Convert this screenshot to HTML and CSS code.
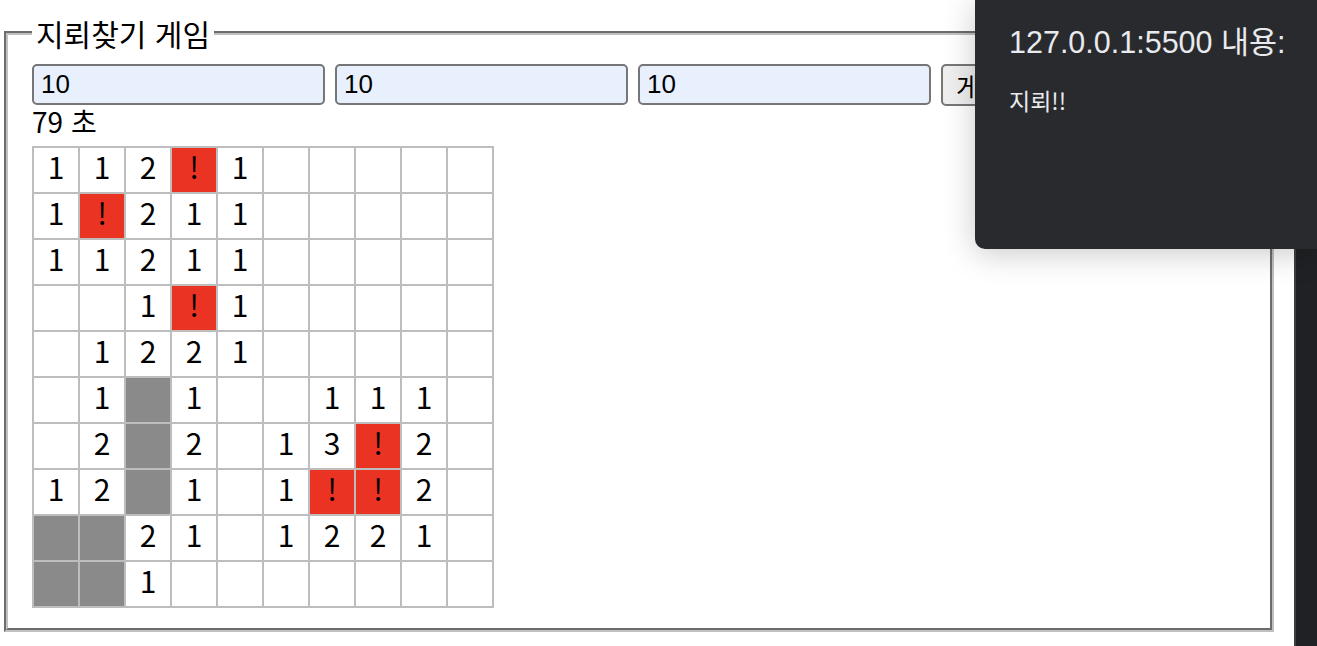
FILE: index.html
```html
<!DOCTYPE html>
<html lang="ko">
<head>
<meta charset="utf-8">
<title>지뢰찾기</title>
<link rel="stylesheet" href="styles.css">
</head>
<body>
<main class="page">
  <fieldset class="game">
    <legend class="game-title">지뢰찾기 게임</legend>
    <form class="controls">
      <input class="field" type="text" value="10">
      <input class="field" type="text" value="10">
      <input class="field" type="text" value="10">
      <button class="start" type="button">게임 시작</button>
    </form>
    <div class="timer">79 초</div>
    <table class="board">
      <tbody>
        <tr><td>1</td><td>1</td><td>2</td><td class="mine">!</td><td>1</td><td></td><td></td><td></td><td></td><td></td></tr>
        <tr><td>1</td><td class="mine">!</td><td>2</td><td>1</td><td>1</td><td></td><td></td><td></td><td></td><td></td></tr>
        <tr><td>1</td><td>1</td><td>2</td><td>1</td><td>1</td><td></td><td></td><td></td><td></td><td></td></tr>
        <tr><td></td><td></td><td>1</td><td class="mine">!</td><td>1</td><td></td><td></td><td></td><td></td><td></td></tr>
        <tr><td></td><td>1</td><td>2</td><td>2</td><td>1</td><td></td><td></td><td></td><td></td><td></td></tr>
        <tr><td></td><td>1</td><td class="closed"></td><td>1</td><td></td><td></td><td>1</td><td>1</td><td>1</td><td></td></tr>
        <tr><td></td><td>2</td><td class="closed"></td><td>2</td><td></td><td>1</td><td>3</td><td class="mine">!</td><td>2</td><td></td></tr>
        <tr><td>1</td><td>2</td><td class="closed"></td><td>1</td><td></td><td>1</td><td class="mine">!</td><td class="mine">!</td><td>2</td><td></td></tr>
        <tr><td class="closed"></td><td class="closed"></td><td>2</td><td>1</td><td></td><td>1</td><td>2</td><td>2</td><td>1</td><td></td></tr>
        <tr><td class="closed"></td><td class="closed"></td><td>1</td><td></td><td></td><td></td><td></td><td></td><td></td><td></td></tr>
      </tbody>
    </table>
  </fieldset>
</main>
<aside class="side-panel"></aside>
<div class="alert" role="alertdialog">
  <div class="alert-title">127.0.0.1:5500 내용:</div>
  <div class="alert-msg">지뢰!!</div>
</div>
</body>
</html>
```
FILE: styles.css
```css
html, body {
  margin: 0;
  padding: 0;
  height: 100%;
  background: #ffffff;
}

body {
  display: flex;
  overflow: hidden;
  font-family: "Noto Sans CJK KR", "Noto Sans", sans-serif;
  color: #000;
}

.page {
  flex: 1;
  padding: 13px 20px 0 4px;
  min-width: 0;
}

.game {
  margin: 0;
  border: 4px groove #c0c0c0;
  padding: 11px 24px 20px 24px;
  min-width: 0;
}

.game-title {
  font-size: 30px;
  line-height: 40px;
  padding: 0 4px;
}

.controls {
  display: flex;
  align-items: flex-start;
  gap: 10px;
  height: 41px;
  margin: 0;
}

.field {
  box-sizing: border-box;
  width: 293px;
  height: 41px;
  margin: 0;
  border: 2px solid #767676;
  border-radius: 5px;
  background: #e8f0fe;
  padding: 0 7px;
  font-family: "Liberation Sans", Arial, sans-serif;
  font-size: 26px;
  color: #000;
}

.start {
  box-sizing: border-box;
  height: 42px;
  margin: 0;
  border: 2px solid #767676;
  border-radius: 5px;
  background: #efefef;
  padding: 0 13px;
  font-family: "Noto Sans CJK KR", sans-serif;
  font-size: 26px;
  color: #000;
}

.timer {
  font-size: 28px;
  line-height: 32px;
  padding-bottom: 9px;
}

.board {
  border-collapse: collapse;
  border: 2px solid #bdbdbd;
}

.board td {
  width: 44px;
  height: 37px;
  padding: 0 0 7px;
  border: 2px solid #bdbdbd;
  text-align: center;
  vertical-align: middle;
  font-size: 30px;
  line-height: 37px;
  background: #fff;
}

.board td.mine {
  background: #ea3323;
}

.board td.closed {
  background: #8a8a8a;
}

.side-panel {
  width: 23px;
  flex: none;
  background: #202124;
  border-left: 2px solid #3d3e42;
  box-sizing: border-box;
}

.alert {
  position: absolute;
  top: 0;
  right: 0;
  width: 342px;
  height: 249px;
  box-sizing: border-box;
  padding: 22px 0 0 34px;
  background: #292a2d;
  border-bottom-left-radius: 10px;
  box-shadow: 0 4px 32px rgba(0, 0, 0, 0.22);
  color: #e8eaed;
  font-family: "Liberation Sans", "Noto Sans CJK KR", sans-serif;
}

.alert-title {
  font-size: 30.5px;
  line-height: 40px;
}

.alert-msg {
  margin-top: 22px;
  font-family: "Noto Sans CJK KR", sans-serif;
  font-size: 23px;
  line-height: 32px;
}
```
